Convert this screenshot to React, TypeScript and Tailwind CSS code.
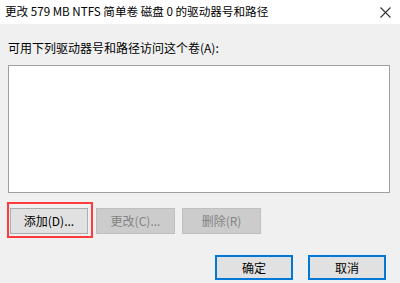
export default function App() {
  return (
    <div
      className="w-[400px] h-[283px] bg-[#f0f0f0] flex flex-col overflow-hidden text-[12px] text-black"
      style={{ fontFamily: '"Microsoft YaHei", "Noto Sans CJK SC", sans-serif' }}
    >
      <div className="h-[24px] bg-white flex items-center justify-between pl-[5px] pr-[9px] shrink-0">
        <span className="leading-none text-[11.6px]">更改 579 MB NTFS 简单卷 磁盘 0 的驱动器号和路径</span>
        <svg width="11" height="11" viewBox="0 0 11 11" className="text-[#333]">
          <path d="M0.5 0.5 L10.5 10.5 M10.5 0.5 L0.5 10.5" stroke="currentColor" strokeWidth="1.1" fill="none" />
        </svg>
      </div>

      <div className="flex flex-col px-[8px] pt-[18px]">
        <div className="leading-none h-[12px] flex items-center">可用下列驱动器号和路径访问这个卷(A):</div>
        <div className="mt-[11px] w-[382px] h-[128px] bg-white border border-[#a0a0a0]" />

        <div className="mt-[9px] flex items-start -ml-[1px]">
          <div className="w-[86px] h-[36px] border-2 border-[#ff3b3b] pt-[4px] pl-px">
            <button className="w-[78px] h-[26px] bg-[#e1e1e1] border border-[#adadad] flex items-center justify-center">
              添加(D)...
            </button>
          </div>
          <button className="ml-[3px] mt-[6px] w-[79px] h-[26px] bg-[#cccccc] border border-[#bfbfbf] text-[#838383] flex items-center justify-center">
            更改(C)...
          </button>
          <button className="ml-[7px] mt-[6px] w-[79px] h-[26px] bg-[#cccccc] border border-[#bfbfbf] text-[#838383] flex items-center justify-center">
            删除(R)
          </button>
        </div>

        <div className="mt-[17px] flex justify-end gap-[15px] pr-[6px]">
          <button className="w-[78px] h-[25px] bg-[#e1e1e1] border-2 border-[#0078d7] flex items-center justify-center">
            确定
          </button>
          <button className="w-[78px] h-[25px] bg-[#e1e1e1] border-2 border-[#0078d7] flex items-center justify-center">
            取消
          </button>
        </div>
      </div>
    </div>
  );
}
